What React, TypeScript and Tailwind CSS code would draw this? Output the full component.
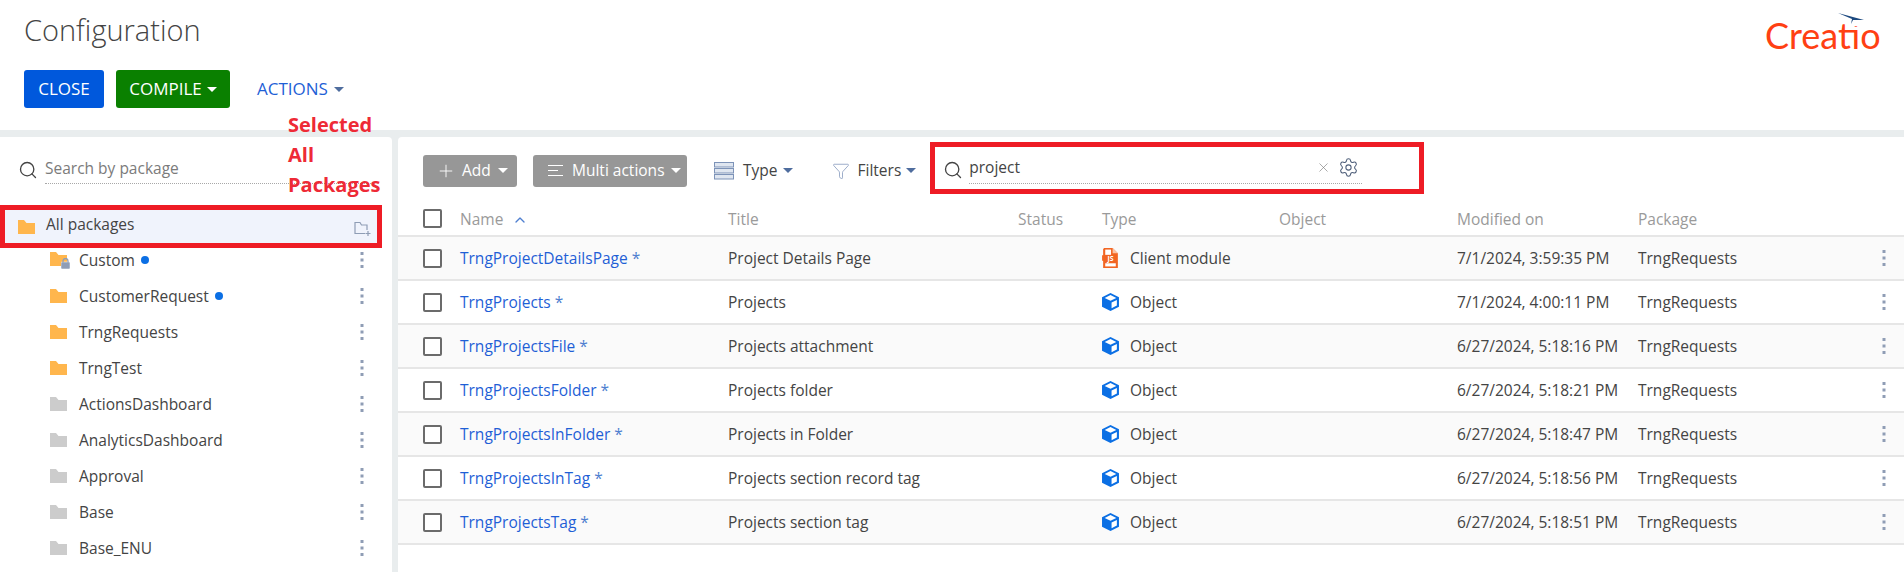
import React from "react";
import { Search, X, Settings, Plus, ChevronUp, Filter } from "lucide-react";

const packages = [
  { name: "CustomerRequest", color: "#ffb64d", dot: true },
  { name: "TrngRequests", color: "#ffb64d" },
  { name: "TrngTest", color: "#ffb64d" },
  { name: "ActionsDashboard", color: "#cccccc" },
  { name: "AnalyticsDashboard", color: "#cccccc" },
  { name: "Approval", color: "#cccccc" },
  { name: "Base", color: "#cccccc" },
  { name: "Base_ENU", color: "#cccccc" },
];

const rows = [
  ["TrngProjectDetailsPage", "Project Details Page", "Client module", "7/1/2024, 3:59:35 PM"],
  ["TrngProjects", "Projects", "Object", "7/1/2024, 4:00:11 PM"],
  ["TrngProjectsFile", "Projects attachment", "Object", "6/27/2024, 5:18:16 PM"],
  ["TrngProjectsFolder", "Projects folder", "Object", "6/27/2024, 5:18:21 PM"],
  ["TrngProjectsInFolder", "Projects in Folder", "Object", "6/27/2024, 5:18:47 PM"],
  ["TrngProjectsInTag", "Projects section record tag", "Object", "6/27/2024, 5:18:56 PM"],
  ["TrngProjectsTag", "Projects section tag", "Object", "6/27/2024, 5:18:51 PM"],
];

const gridCols = "grid grid-cols-[25px_37px_268px_290px_84px_177px_178px_181px_1fr] items-center";

const Caret = ({ color = "#ffffff" }: { color?: string }) => (
  <svg width="10" height="5" viewBox="0 0 10 5" className="shrink-0">
    <path d="M0 0h10L5 5z" fill={color} />
  </svg>
);

const Folder = ({ color }: { color: string }) => (
  <svg width="17" height="14" viewBox="0 0 17 14" className="shrink-0">
    <path d="M0 0h6l2.500 3H17v11H0z" fill={color} />
  </svg>
);

const Dots = () => (
  <svg width="4" height="16" viewBox="0 0 4 16" className="shrink-0">
    <rect x="0.5" y="0" width="3" height="3" fill="#8f9db5" />
    <rect x="0.5" y="6.500" width="3" height="3" fill="#8f9db5" />
    <rect x="0.5" y="13" width="3" height="3" fill="#8f9db5" />
  </svg>
);

const Checkbox = () => (
  <span className="block w-[19px] h-[19px] border-2 border-[#6b6b6b] rounded-[2px] bg-white" />
);

const Cube = () => (
  <svg width="17" height="18" viewBox="0 0 16 17" className="shrink-0">
    <path d="M8 0l8 4v9l-8 4-8-4V4z" fill="#0b6fe4" />
    <path d="M8 2l5.500 2.700L8 7.400 2.500 4.700z" fill="#ffffff" />
    <path d="M9 9l5-2.500v5.400L9 14.400z" fill="#ffffff" />
  </svg>
);

const JsFile = () => (
  <svg width="17" height="20" viewBox="0 0 16 19" className="shrink-0">
    <path d="M2 0h8l5 5v14H1V12H0V7h1V1z" fill="#f26522" />
    <path d="M10 0v5h5z" fill="#fbc4a6" />
    <rect x="3" y="1.500" width="5.500" height="5" fill="#ffffff" />
    <rect x="3" y="14.500" width="10" height="3" fill="#ffffff" />
    <text x="8" y="12.200" fontSize="6.500" fontWeight="700" fill="#ffffff" textAnchor="middle" fontFamily="Open Sans, sans-serif">JS</text>
  </svg>
);

const TypeIcon = () => (
  <svg width="20" height="18" viewBox="0 0 20 18" className="shrink-0">
    <rect x="0.5" y="0.500" width="19" height="4.500" fill="#dfe6f0" stroke="#7d93b8" />
    <rect x="0.5" y="6.500" width="19" height="4.500" fill="#dfe6f0" stroke="#7d93b8" />
    <rect x="0.5" y="12.500" width="19" height="4.500" fill="#dfe6f0" stroke="#7d93b8" />
  </svg>
);

const Sidebar = () => (
  <aside className="w-[392px] shrink-0 bg-white rounded-tr-[4px] overflow-hidden">
    <div className="flex items-start pl-[18px] pr-[17px] pt-[15px] h-[68px]">
      <Search size={20} strokeWidth={1.6} color="#444444" className="shrink-0 mt-[8px]" />
      <div className="ml-[7px] flex-1 h-[32px] leading-[32px] text-[#7b7b7b] border-b border-dotted border-[#a8a8a8]">
        Search by package
      </div>
    </div>
    <div className="h-[43px] border-[5px] border-[#ee1c25] w-[382px] bg-[#f0f3fc] flex items-center pl-[13px] pr-[6px]">
      <Folder color="#ffb64d" />
      <span className="ml-[11px] -mt-[3px] text-[#444444]">All packages</span>
      <svg width="17" height="16" viewBox="0 0 17 16" className="ml-auto mt-[4px]" fill="none" stroke="#8f9db5" strokeWidth="1.2">
        <path d="M11 12.500H1V1.500h5l1.500 2.500H13v5" />
        <path d="M14 10v5M11.500 12.500h5" />
      </svg>
    </div>
    <div className="h-[36px] flex items-center pl-[50px] pr-[28px] -mt-[6px]">
      <span className="relative shrink-0 w-[17px] h-[16px]">
        <Folder color="#ffb64d" />
        <svg width="9" height="11" viewBox="0 0 9 11" className="absolute left-[11px] top-[6px]">
          <rect x="0" y="4" width="9" height="7" rx="1" fill="#8f9db5" stroke="#ffffff" strokeWidth="0.5" />
          <path d="M2 4.500V3a2.500 2.500 0 0 1 5 0v1.500" fill="none" stroke="#8f9db5" strokeWidth="1.3" />
        </svg>
      </span>
      <span className="ml-[12px] mt-[2px] text-[#444444]">Custom</span>
      <span className="ml-[6px] -mt-[1px] w-[8px] h-[8px] rounded-full bg-[#0b6fe4]" />
      <span className="ml-auto"><Dots /></span>
    </div>
    {packages.map((p) => (
      <div key={p.name} className="h-[36px] flex items-center pl-[50px] pr-[28px]">
        <Folder color={p.color} />
        <span className="ml-[12px] mt-[2px] text-[#444444]">{p.name}</span>
        {p.dot && <span className="ml-[6px] -mt-[1px] w-[8px] h-[8px] rounded-full bg-[#0b6fe4]" />}
        <span className="ml-auto"><Dots /></span>
      </div>
    ))}
  </aside>
);

const Toolbar = () => (
  <div className="h-[63px] flex items-center pl-[25px] pt-[4px]">
    <button className="w-[94px] h-[32px] bg-[#979797] rounded-[3px] text-white flex items-center pl-[13px]">
      <Plus size={20} strokeWidth={1.1} />
      <span className="ml-[6px]">Add</span>
      <span className="ml-[7px]"><Caret /></span>
    </button>
    <button className="ml-[16px] w-[154px] h-[32px] bg-[#979797] rounded-[3px] text-white flex items-center pl-[15px]">
      <svg width="16" height="12" viewBox="0 0 16 12" fill="none" stroke="#ffffff" strokeWidth="1" className="shrink-0">
        <path d="M0 .5h15M0 5.500h10M0 10.500h15" />
      </svg>
      <span className="ml-[8px] whitespace-nowrap">Multi actions</span>
      <span className="ml-[6px]"><Caret /></span>
    </button>
    <div className="ml-[27px] flex items-center">
      <TypeIcon />
      <span className="ml-[9px] text-[#444444]">Type</span>
      <span className="ml-[5px]"><Caret color="#4f6d9e" /></span>
    </div>
    <div className="ml-[39px] flex items-center">
      <Filter size={18} strokeWidth={1} color="#7d93b8" />
      <span className="ml-[8px] text-[#444444]">Filters</span>
      <span className="ml-[5px]"><Caret color="#4f6d9e" /></span>
    </div>
    <div className="ml-[14px] -mt-[5px] w-[494px] h-[52px] border-[5px] border-[#ee1c25] flex items-center pl-[8px]">
      <Search size={20} strokeWidth={1.6} color="#444444" className="shrink-0 mt-[4px]" />
      <div className="ml-[6px] w-[393px] h-[31px] leading-[31px] flex items-center border-b border-dotted border-[#a8a8a8] text-[#444444]">
        <span>project</span>
        <X size={15} strokeWidth={1} color="#777777" className="ml-auto" />
        <Settings size={21} strokeWidth={1.2} color="#4f5f7a" className="ml-[7px] mr-[3px]" />
      </div>
    </div>
  </div>
);

const DataTable = () => (
  <div>
    <div className={`${gridCols} h-[37px] pt-[2px] border-b-2 border-[#e6e6e6] text-[#9a9a9a]`}>
      <span className="col-start-2"><Checkbox /></span>
      <span className="col-start-3 mt-[3px] flex items-center">
        Name
        <ChevronUp size={16} strokeWidth={2} color="#4f7fd0" className="ml-[9px]" />
      </span>
      <span className="col-start-4 mt-[3px]">Title</span>
      <span className="col-start-5 mt-[3px]">Status</span>
      <span className="col-start-6 mt-[3px]">Type</span>
      <span className="col-start-7 mt-[3px]">Object</span>
      <span className="col-start-8 mt-[3px]">Modified on</span>
      <span className="col-start-9 mt-[3px]">Package</span>
    </div>
    {rows.map((r, i) => (
      <div
        key={r[0]}
        className={`${gridCols} h-[44px] border-b-2 border-[#e6e6e6] text-[#444444] ${i % 2 === 0 ? "bg-[#fafafa]" : "bg-white"}`}
      >
        <span className="col-start-2"><Checkbox /></span>
        <span className="col-start-3 mt-[2px] text-[#1f5fd6] whitespace-nowrap">
          {r[0]} <span className="text-[#4f7fd0]">*</span>
        </span>
        <span className="col-start-4 mt-[2px] whitespace-nowrap">{r[1]}</span>
        <span className="col-start-6 flex items-center gap-[11px]">
          {r[2] === "Object" ? <Cube /> : <JsFile />}
          <span className="mt-[2px]">{r[2]}</span>
        </span>
        <span className="col-start-8 mt-[2px] whitespace-nowrap">{r[3]}</span>
        <span className="col-start-9 flex items-center justify-between pr-[18px]">
          <span className="mt-[2px]">TrngRequests</span>
          <Dots />
        </span>
      </div>
    ))}
  </div>
);

export default function App() {
  return (
    <div className="relative w-[1904px] h-[572px] overflow-hidden bg-white text-[15.5px] font-['Open_Sans',sans-serif]">
      <header className="relative h-[130px] pl-[24px]">
        <h1 className="pt-[11px] h-[70px] text-[29px] leading-[38px] font-light text-[#444444]">Configuration</h1>
        <div className="flex items-center">
          <button className="w-[80px] h-[38px] bg-[#0058dc] rounded-[3px] text-white text-[17px]">CLOSE</button>
          <button className="ml-[12px] w-[114px] h-[38px] bg-[#0a8000] rounded-[3px] text-white text-[17px] flex items-center justify-center gap-[5px]">
            COMPILE <Caret />
          </button>
          <span className="ml-[27px] text-[17px] text-[#1f5fd6] flex items-center gap-[6px]">
            ACTIONS <Caret color="#4f6d9e" />
          </span>
        </div>
        <div className="absolute left-[1765px] top-[11px] w-[120px] h-[40px]">
          <span className="absolute left-0 top-[1px] text-[36px] leading-[46px] font-['Lato',sans-serif] text-[#ff4013]">Creatio</span>
          <svg width="27" height="16" viewBox="0 0 27 16" className="absolute left-[73px] top-[2px]">
            <rect x="14" y="6" width="10" height="7" fill="#ffffff" />
            <path d="M0 0l26 7-11 0-2 4 1-5z" fill="#1d4a80" />
          </svg>
        </div>
      </header>
      <div className="flex h-[442px] bg-[#e9edee] pt-[7px] gap-[6px]">
        <Sidebar />
        <main className="flex-1 bg-white rounded-tl-[4px] overflow-hidden">
          <Toolbar />
          <DataTable />
        </main>
      </div>
      <div className="absolute left-[288px] top-[110px] w-[100px] text-[20px] leading-[30px] font-bold text-[#ee2a36]">
        Selected All Packages
      </div>
    </div>
  );
}
